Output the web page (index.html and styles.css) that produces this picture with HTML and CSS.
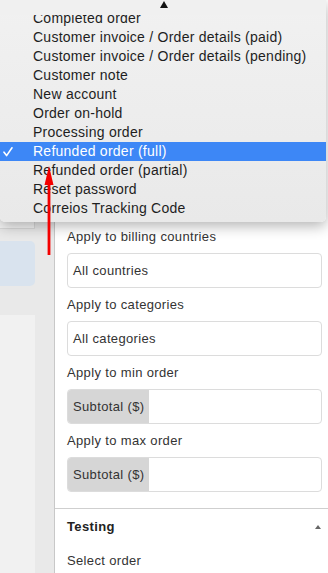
FILE: index.html
```html
<!DOCTYPE html>
<html lang="en">
<head>
  <meta charset="UTF-8">
  <title>Email settings</title>
  <link rel="stylesheet" href="styles.css">
</head>
<body>

  <div class="page">
    <div class="sidebar">
      <div class="side-top"></div>
      <div class="side-active"></div>
      <div class="side-rest"></div>
    </div>

    <div class="main">
      <div class="settings">
        <div class="field">
          <label>Apply to billing countries</label>
          <div class="input">All countries</div>
        </div>
        <div class="field">
          <label>Apply to categories</label>
          <div class="input">All categories</div>
        </div>
        <div class="field">
          <label>Apply to min order</label>
          <div class="input-group">
            <span class="addon">Subtotal ($)</span>
            <span class="grow"></span>
          </div>
        </div>
        <div class="field">
          <label>Apply to max order</label>
          <div class="input-group">
            <span class="addon">Subtotal ($)</span>
            <span class="grow"></span>
          </div>
        </div>
      </div>

      <div class="section">
        <div class="section-head">
          <span>Testing</span>
          <span class="toggle"></span>
        </div>
        <div class="section-body">Select order</div>
      </div>
    </div>
  </div>

  <!-- open select menu -->
  <div class="menu">
    <div class="scroll-up"><span class="up-arrow"></span></div>
    <ul class="menu-list">
      <li>Completed order</li>
      <li>Customer invoice / Order details (paid)</li>
      <li>Customer invoice / Order details (pending)</li>
      <li>Customer note</li>
      <li>New account</li>
      <li>Order on-hold</li>
      <li>Processing order</li>
      <li class="selected">
        <svg class="check" width="10" height="10" viewBox="0 0 10 10"><path d="M1 5.2 L3.6 8.6 L9 0.8" fill="none" stroke="#fff" stroke-width="1.6" stroke-linecap="round" stroke-linejoin="round"/></svg>
        Refunded order (full)
      </li>
      <li>Refunded order (partial)</li>
      <li>Reset password</li>
      <li>Correios Tracking Code</li>
    </ul>
  </div>

  <svg class="pointer" width="10" height="89" viewBox="0 0 10 89">
    <polygon points="5,0 0.5,19 9.5,19" fill="#f40000"/>
    <rect x="3.6" y="15" width="2.8" height="74" fill="#f40000"/>
  </svg>

</body>
</html>
```

FILE: styles.css
```css
body {
  margin: 0;
  font-family: "Liberation Sans", Arial, sans-serif;
  color: #333;
}
.page {
  display: flex;
  width: 328px;
  min-height: 573px;
}
.sidebar {
  flex: none;
  width: 54px;
  background-color: #e9e9e9;
  border-right: 1px solid #c8c8c8;
  display: flex;
  flex-direction: column;
}
.side-top {
  width: 34px;
  height: 228px;
  background-color: #f5f5f5;
  border-right: 1px solid #dadada;
  border-bottom: 1px solid #dadada;
}
.side-active {
  width: 35px;
  height: 45px;
  margin-top: 12px;
  background-color: #d9e3ee;
  border-radius: 0 5px 5px 0;
}
.side-rest {
  width: 35px;
  flex: 1;
  margin-top: 29px;
  background-color: #f1f1f1;
}
.main {
  flex: 1;
  min-width: 0;
  background-color: white;
}
.settings {
  padding: 228px 6px 8px 12px;
}
.field {
  margin-bottom: 8px;
  font-size: 13px;
  letter-spacing: 0.35px;
  line-height: 18px;
}
.field label {
  display: block;
  margin-bottom: 7px;
}
.input {
  height: 33px;
  line-height: 33px;
  padding-left: 5px;
  border: 1px solid #dcdcdc;
  border-radius: 4px;
}
.input-group {
  display: flex;
  height: 33px;
  line-height: 33px;
  border: 1px solid #dcdcdc;
  border-radius: 4px;
  overflow: hidden;
}
.addon {
  width: 76px;
  padding-left: 5px;
  background-color: #d6d6d6;
}
.grow {
  flex: 1;
}
.section {
  border-top: 1px solid #cfcfcf;
  padding: 9px 6px 0 12px;
  font-size: 13px;
  letter-spacing: 0.35px;
  line-height: 18px;
}
.section-head {
  display: flex;
  justify-content: space-between;
  align-items: center;
  font-weight: bold;
  color: #222;
}
.toggle {
  width: 0;
  height: 0;
  margin-right: 1px;
  border-left: 3.5px solid transparent;
  border-right: 3.5px solid transparent;
  border-bottom: 4px solid #666;
}
.section-body {
  margin-top: 16px;
}
.menu {
  position: absolute;
  top: 0;
  left: 0;
  width: 326px;
  height: 222px;
  overflow: hidden;
  background: linear-gradient(#f1f1f1, #e9e9e9);
  border-radius: 0 0 5px 5px;
  box-shadow: 0 4px 14px rgba(0, 0, 0, 0.3);
}
.scroll-up {
  position: absolute;
  z-index: 2;
  top: 0;
  left: 0;
  right: 0;
  height: 15px;
  background-color: #f0f0f0;
  display: flex;
  justify-content: center;
}
.up-arrow {
  margin-top: 1px;
  margin-left: 2px;
  width: 0;
  height: 0;
  border-left: 4.5px solid transparent;
  border-right: 4.5px solid transparent;
  border-bottom: 7px solid #111;
}
.menu-list {
  list-style: none;
  margin: 0;
  padding: 8.5px 0 0 0;
  font-size: 14px;
  letter-spacing: 0.25px;
  color: #1e1e1e;
}
.menu-list li {
  position: relative;
  height: 19px;
  line-height: 19px;
  padding-left: 33px;
  white-space: nowrap;
}
.menu-list li.selected {
  background-color: #3d87f6;
  color: white;
}
.check {
  position: absolute;
  left: 3px;
  top: 5px;
}
.pointer {
  position: absolute;
  left: 44px;
  top: 166px;
}
```
